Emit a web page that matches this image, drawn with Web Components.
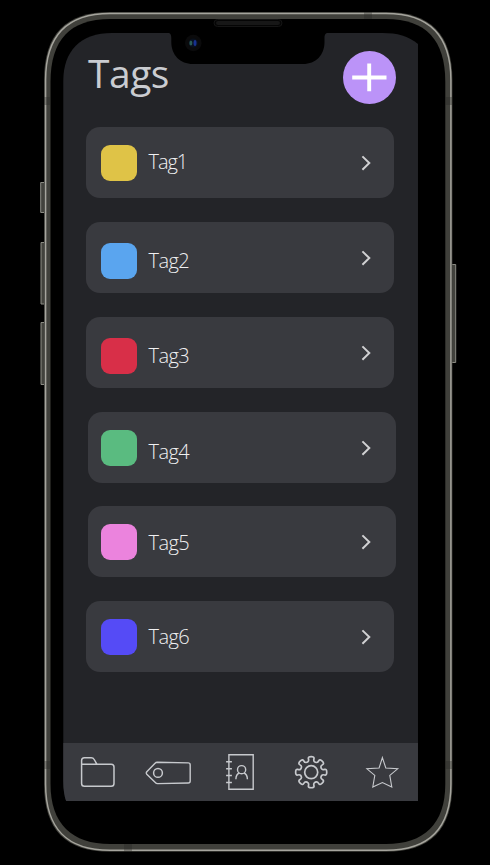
<!DOCTYPE html>
<html lang="en"><head><meta charset="utf-8"><title>Tags</title>
<style>html,body{margin:0;background:#000}body{width:490px;height:865px;overflow:hidden;font-family:"Open Sans","Noto Sans",sans-serif}</style></head>
<body>
<phone-shell>
  <screen-header>Tags</screen-header>
  <tag-list>
    <tag-row style="--c:#dfc347;--sy:18.3px;--ty:0px;--ls:-1.1px">Tag1</tag-row>
    <tag-row style="--c:#5aa5ef;--sy:21px;--ty:3.5px">Tag2</tag-row>
    <tag-row style="--c:#d82f48;--sy:21px;--ty:3.5px">Tag3</tag-row>
    <tag-row style="--c:#5abb80;--sy:18px;--ty:5.3px;--dx:2px">Tag4</tag-row>
    <tag-row style="--c:#eb83dd;--sy:18px;--ty:.9px;--dx:2px">Tag5</tag-row>
    <tag-row style="--c:#554bf6;--sy:18px;--ty:.9px">Tag6</tag-row>
  </tag-list>
  <tab-bar>
    <tab-icon name="folder"></tab-icon><tab-icon name="tag"></tab-icon><tab-icon name="contacts"></tab-icon><tab-icon name="settings"></tab-icon><tab-icon name="star"></tab-icon>
  </tab-bar>
</phone-shell>
<script>
function define(name, html) {
  const t = document.createElement('template');
  t.innerHTML = html;
  customElements.define(name, class extends HTMLElement {
    constructor() { super(); this.attachShadow({mode:'open'}).append(t.content.cloneNode(true)); }
  });
}
define('phone-shell', `
<style>
:host{display:block;position:relative;box-sizing:border-box;width:490px;height:865px;padding:33px 72px 64px 63.3px}
.frame{position:absolute;inset:0}
.screen{position:relative;display:flex;flex-direction:column;width:354.7px;height:768px;background:#232428;
clip-path:path('M0 48C0 18 17 0 49 0H319C334 0 345 3 354.7 11V768H2.8Q0 760 0 748Z')}
.notch{position:absolute;inset:0;pointer-events:none}
</style>
<svg class="frame" width="490" height="865" fill="none">
  <g fill="#42423d" stroke="#8b8b83" stroke-width="1">
    <path d="M45 182.500H40.700V212.500H45M45 242.500H41V304H45M45 322.500H41V384.500H45"/>
    <path d="M451 264.500H455.700V362.500H451"/>
  </g>
  <path d="M44 80C44 34 66 12 110 12H386C430 12 452.400 34 452.400 80V784C452.400 830 430 851.800 386 851.800H110C66 851.800 44 830 44 784Z" fill="#40403b"/>
  <path d="M45.600 80C45.600 35 67 13.500 110 13.500H386C429 13.500 450.900 35 450.900 80V784C450.900 829 429 850.300 386 850.300H110C67 850.300 45.600 829 45.600 784Z" stroke="#a5a49d" stroke-width="1.500"/>
  <path d="M50.500 82C50.500 40 70 19 110 19H386C426 19 445.300 40 445.300 82V784C445.300 824 424 844 386 844H110C72 844 50.500 824 50.500 784Z" fill="#000"/>
  <path d="M44 97h6.500v8H44zM445.500 97h7v8h-7zM44 761h6.500v8H44zM445.500 761h7v8h-7zM364 12h8v7h-8zM124 844h8v8h-8z" fill="#252522" opacity=".32"/>
  <rect x="214" y="19.500" width="68" height="7" rx="3.500" fill="#050505" stroke="#151515"/>
  <rect x="216" y="21" width="64" height="4" rx="2" fill="#171717"/>
</svg>
<div class="screen"><slot></slot></div>
<svg class="notch" width="490" height="865">
  <path d="M166 32.500C170 32.500 171.300 34 171.300 38V42C171.300 55 180 64 193 64H303C316 64 324.500 55 324.500 42V38C324.500 34 326 32.500 330 32.500Z" fill="#000"/>
  <circle cx="193.300" cy="43" r="8.300" fill="#0a0a0b"/><circle cx="193.300" cy="43" r="4.600" fill="#08101e"/>
  <ellipse cx="190.900" cy="43" rx="1.500" ry="2.600" fill="#2a5a54"/><ellipse cx="195" cy="43" rx="1.500" ry="3" fill="#17318f"/>
</svg>`);
define('screen-header', `
<style>
:host{display:flex;justify-content:space-between;height:94.200px;flex:none;box-sizing:border-box;padding:0 22px 0 24.700px}
.t{font-size:39px;line-height:54px;margin-top:13px;color:#caccd1;letter-spacing:-.5px;height:54px}
svg{margin-top:17.500px;flex:none}
</style>
<div class="t"><slot></slot></div>
<svg width="53" height="53"><circle cx="26.500" cy="26.500" r="26.500" fill="#bb93f8"/><path d="M9.200 26.500H43.500M26.200 12.500V40.300" stroke="#fff" stroke-width="3.900"/></svg>`);
define('tag-list', `<style>:host{display:flex;flex-direction:column;gap:23.800px;flex:1;padding-left:23.200px}</style><slot></slot>`);
define('tag-row', `
<style>
:host{display:flex;box-sizing:border-box;width:307.500px;height:71px;flex:none;border-radius:14px;background:#393a3f;margin-left:var(--dx,0px);padding-left:calc(14.100px - var(--dx,0px))}
.s{width:36px;height:36px;flex:none;border-radius:9px;background:var(--c);margin-top:var(--sy)}
.t{font-size:20px;font-weight:300;line-height:28px;height:28px;color:#f0f0f2;margin:calc(21.300px + var(--ty)) 0 0 12px;letter-spacing:var(--ls,-.6px);flex:1}
svg{margin:28px calc(22px + var(--dx,0px)) 0 0;flex:none}
</style>
<div class="s"></div><div class="t"><slot></slot></div>
<svg width="12" height="16" fill="none"><path d="M2.400 1.400L9.300 8L2.400 14.800" stroke="#d0d0d2" stroke-width="2"/></svg>`);
define('tab-bar', `<style>:host{display:grid;grid-template-columns:repeat(5,1fr);height:58px;flex:none;background:#393a3f}</style><slot></slot>`);

// Closed quadratic spline whose control points outline eight rounded teeth.
function gear(cx, cy) {
  const p = [];
  for (let i = 0; i < 8; i++)
    for (const [a, r] of [[-12,15.9],[12,15.9],[11,11.6],[22.5,10.6],[34,11.6]]) {
      const t = (i * 45 + a - 90) * Math.PI / 180;
      p.push([cx + r * Math.cos(t), cy + r * Math.sin(t)]);
    }
  const mid = (a, b) => ((a[0]+b[0])/2).toFixed(2) + ' ' + ((a[1]+b[1])/2).toFixed(2);
  let d = 'M' + mid(p[p.length-1], p[0]);
  p.forEach((q, i) => d += 'Q' + q[0].toFixed(2) + ' ' + q[1].toFixed(2) + ' ' + mid(q, p[(i+1)%p.length]));
  return d + 'Z';
}
const icons = {
  folder: [63.3, '<path stroke-width="1.5" d="M81.900 764.200V760.500Q81.900 757.700 84.700 757.700H91.500Q93.500 757.700 94.500 759.500L97.200 764.200H111.500Q114.300 764.200 114.300 767V783.500Q114.300 786.300 111.500 786.300H84.700Q81.900 786.300 81.900 783.500V764.200H97.200"/>'],
  tag: [134.2, '<path stroke-width="1.400" d="M157.500 762.300L188.500 762.900Q190.400 762.900 190.400 765V781Q190.400 783 188.500 783L158 783.600Q156.500 783.700 155.500 782.500L147 774.300Q146 773 147 771.700L155 763.500Q156.200 762.300 157.500 762.300Z"/><circle cx="158.200" cy="772.900" r="4.400" stroke-width="1.500"/>'],
  contacts: [205.1, '<path stroke-width="1.400" d="M229 754.700H253.300V789.300H229ZM226.200 761.800H232M226.200 768.800H232M226.200 775.500H232M226.200 782.500H232"/><circle cx="241.700" cy="769.700" r="4.100" stroke-width="1.400"/><path stroke-width="1.400" d="M236 779.300C236 776 237.500 773.800 239.500 773M247.500 779.300C247.500 776 246 773.800 244 773"/>'],
  settings: [276, '<path stroke-width="1.700" d="' + gear(311.2, 772.2) + '"/><circle cx="311.200" cy="772.200" r="6.500" stroke-width="1.700"/>'],
  star: [346.9, '<path stroke-width="1.100" d="M382.300 757.600L385.700 768L397.600 768.800L389.700 775.400L391.700 787L382.300 782.600L372.700 787L374.700 775.400L366.800 768.800L379 768Z"/>']
};
customElements.define('tab-icon', class extends HTMLElement {
  connectedCallback() {
    const [x, body] = icons[this.getAttribute('name')];
    this.attachShadow({mode:'open'}).innerHTML = '<style>:host{display:block;min-width:0}svg{display:block}</style><svg width="70.900" height="58" viewBox="' + x + ' 743 70.900 58" fill="none" stroke="#c7c9cd">' + body + '</svg>';
  }
});
</script>
</body></html>
